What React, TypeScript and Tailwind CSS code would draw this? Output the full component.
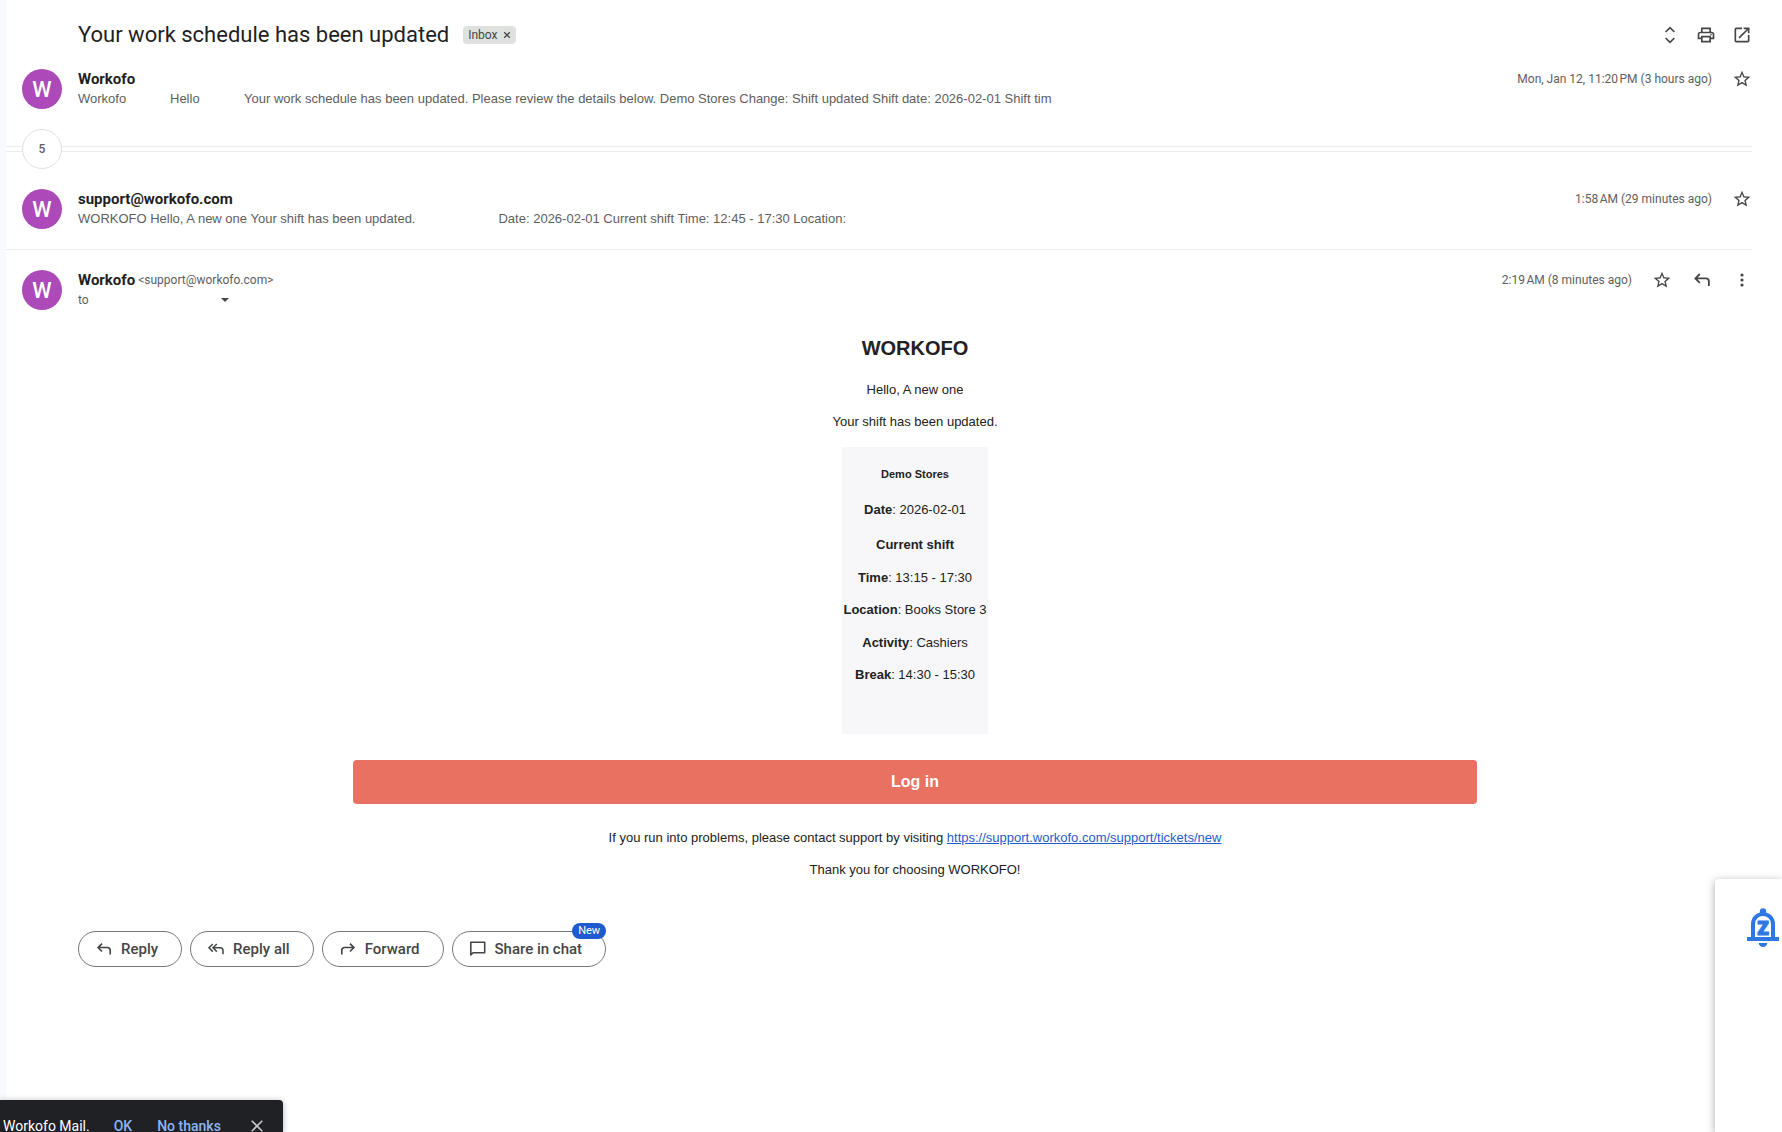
import type { ReactNode } from "react";

type IconProps = { className?: string };

const StarIcon = () => (
  <svg viewBox="0 0 24 24" className="size-5" fill="currentColor" aria-hidden="true">
    <path d="M22 9.24l-7.19-.62L12 2 9.19 8.63 2 9.24l5.46 4.73L5.82 21 12 17.27 18.18 21l-1.63-7.03L22 9.24zM12 15.4l-3.76 2.27 1-4.28-3.32-2.88 4.38-.38L12 6.1l1.71 4.04 4.38.38-3.32 2.88 1 4.28L12 15.4z" />
  </svg>
);

const ExpandIcon = () => (
  <svg viewBox="0 0 20 20" className="size-5" fill="none" stroke="currentColor" strokeWidth="1.7" aria-hidden="true">
    <path d="M5.6 7L10 2.7 14.4 7M5.6 13l4.4 4.3 4.4-4.3" />
  </svg>
);

const PrintIcon = () => (
  <svg viewBox="0 0 24 24" className="size-5" fill="currentColor" aria-hidden="true">
    <path d="M19 8h-1V3H6v5H5c-1.66 0-3 1.34-3 3v6h4v4h12v-4h4v-6c0-1.66-1.34-3-3-3zM8 5h8v3H8V5zm8 12v2H8v-4h8v2zm2-2v-2H6v2H4v-4c0-.55.45-1 1-1h14c.55 0 1 .45 1 1v4h-2z" />
    <circle cx="18" cy="11.5" r="1" />
  </svg>
);

const OpenIcon = () => (
  <svg viewBox="0 0 24 24" className="size-5" fill="currentColor" aria-hidden="true">
    <path d="M19 19H5V5h7V3H5a2 2 0 0 0-2 2v14a2 2 0 0 0 2 2h14c1.1 0 2-.9 2-2v-7h-2v7zM14 3v2h3.59l-9.83 9.83 1.41 1.41L19 6.41V10h2V3h-7z" />
  </svg>
);

const ReplyIcon = ({ className = "size-5" }: IconProps) => (
  <svg viewBox="0 0 20 20" className={className} fill="none" stroke="currentColor" strokeWidth="1.8" aria-hidden="true">
    <path d="M7.8 4L3.4 8.4l4.4 4.4M3.4 8.4h10.3a3.2 3.2 0 0 1 3.2 3.2V16" />
  </svg>
);

const ReplyAllIcon = () => (
  <svg viewBox="0 0 20 20" className="size-5" fill="none" stroke="currentColor" strokeWidth="1.5" aria-hidden="true">
    <path d="M6.8 5L3 8.8l3.8 3.8M10.8 5L7 8.8l3.8 3.8M7 8.8h7.2a2.8 2.8 0 0 1 2.8 2.8v3.6" />
  </svg>
);

const MoreIcon = () => (
  <svg viewBox="0 0 20 20" className="size-5" fill="currentColor" aria-hidden="true">
    <circle cx="10" cy="5" r="1.6" />
    <circle cx="10" cy="10" r="1.6" />
    <circle cx="10" cy="15" r="1.6" />
  </svg>
);

const ChatIcon = () => (
  <svg viewBox="0 0 20 20" className="size-5" fill="none" stroke="currentColor" strokeWidth="1.6" aria-hidden="true">
    <path d="M2.8 16V3.3h13.9v10.4H5.1z" strokeLinejoin="round" />
  </svg>
);

const SnoozeBell = () => (
  <svg viewBox="0 0 32 40" className="h-10 w-8" fill="#2f78e4" role="img" aria-label="Snoozed notifications">
    <circle cx="16" cy="3.5" r="3.2" />
    <path d="M6 30V16a10 10 0 0 1 20 0v14" fill="none" stroke="#2f78e4" strokeWidth="4" />
    <path d="M0 29h32v4H0zM11.7 35h8.6a4.3 4 0 0 1-8.6 0z" />
    <text x="16" y="27" textAnchor="middle" fontFamily="Open Sans, sans-serif" fontSize="19" fontWeight="800" stroke="#2f78e4" strokeWidth="1">
      Z
    </text>
  </svg>
);

function IconButton({ label, children }: { label: string; children: ReactNode }) {
  return (
    <button type="button" aria-label={label} className="flex size-5 items-center justify-center text-[#444746]">
      {children}
    </button>
  );
}

const Avatar = () => (
  <div className="flex size-10 shrink-0 items-center justify-center rounded-full bg-[#ab4ab8] text-[22px] font-medium text-white">
    W
  </div>
);

type MessageProps = { sender: ReactNode; detail: ReactNode; time: string; actions: ReactNode };

function Message({ sender, detail, time, actions }: MessageProps) {
  return (
    <div className="flex items-start gap-4 pl-4">
      <Avatar />
      <div className="min-w-0 flex-1">
        <div className="h-5 leading-5">{sender}</div>
        <div className="h-5 overflow-hidden leading-5 whitespace-nowrap text-[#5e5e5e]">{detail}</div>
      </div>
      <div className="flex h-5 items-center gap-5 text-xs text-[#5e5e5e]">
        <time>{time}</time>
        {actions}
      </div>
    </div>
  );
}

const Name = ({ children }: { children: ReactNode }) => (
  <span className="text-[15px] font-bold text-[#1f1f1f]">{children}</span>
);

function Pill({ icon, label, badge }: { icon: ReactNode; label: string; badge?: string }) {
  return (
    <button
      type="button"
      className="relative flex h-9 items-center gap-[7px] rounded-full border border-[#747775] pr-[23px] pl-[15px] text-[15px] font-medium text-[#444746]"
    >
      {icon}
      {label}
      {badge && (
        <span className="absolute -top-[9px] -right-px rounded-full bg-[#1f5bd0] px-[6px] text-[11px] leading-4 font-normal text-white">
          {badge}
        </span>
      )}
    </button>
  );
}

const star = (
  <IconButton label="Star">
    <StarIcon />
  </IconButton>
);

export default function App() {
  return (
    <div className="relative flex h-screen overflow-hidden bg-white font-[Roboto,sans-serif]">
      <div className="w-[6px] shrink-0 bg-[#f8fafd]" />

      <main className="mr-[30px] flex-1">
        <header className="flex h-[69px] items-center pl-[72px]">
          <h1 className="text-[22px] leading-7 text-[#1f1f1f]">Your work schedule has been updated</h1>
          <span className="ml-[14px] flex h-[18px] items-center gap-[5px] rounded bg-[#dfe1df] px-[5px] text-xs text-[#444746]">
            Inbox
            <button type="button" aria-label="Remove label Inbox" className="text-[#444746]">
              <svg viewBox="0 0 8 8" className="mt-px size-2" stroke="currentColor" strokeWidth="1.3" aria-hidden="true">
                <path d="M1.2 1.2l5.6 5.6M6.8 1.2L1.2 6.8" />
              </svg>
            </button>
          </span>
          <div className="ml-auto flex gap-4">
            <IconButton label="Expand all">
              <ExpandIcon />
            </IconButton>
            <IconButton label="Print all">
              <PrintIcon />
            </IconButton>
            <IconButton label="Open in new window">
              <OpenIcon />
            </IconButton>
          </div>
        </header>

        <section className="h-[77px]">
          <Message
            sender={<Name>Workofo</Name>}
            detail={
              <div className="flex font-['Liberation_Sans',sans-serif] text-[13px]">
                <span className="mr-11 w-12 overflow-hidden">Workofo</span>
                <span className="mr-11 w-[30px] overflow-hidden">Hello</span>
                <span>
                  Your work schedule has been updated. Please review the details below. Demo Stores Change: Shift updated
                  Shift date: 2026-02-01 Shift tim
                </span>
              </div>
            }
            time={"Mon, Jan 12, 11:20\u202fPM (3 hours ago)"}
            actions={star}
          />
        </section>

        <div className="relative h-[6px] border-y border-[#ebedec]">
          <button
            type="button"
            aria-label="Show 5 older messages"
            className="absolute -top-[18px] left-4 size-10 rounded-full border border-[#dfe1e0] bg-white text-xs font-medium text-[#5e5e5e]"
          >
            5
          </button>
        </div>

        <section className="h-[98px] border-b border-[#ebedec] pt-[37px]">
          <Message
            sender={<Name>support@workofo.com</Name>}
            detail={
              <div className="flex gap-[83px] font-['Liberation_Sans',sans-serif] text-[13px]">
                <span>WORKOFO Hello, A new one Your shift has been updated.</span>
                <span>Date: 2026-02-01 Current shift Time: 12:45 - 17:30 Location:</span>
              </div>
            }
            time={"1:58\u202fAM (29 minutes ago)"}
            actions={star}
          />
        </section>

        <section className="pt-5">
          <Message
            sender={
              <div className="flex gap-[3px]">
                <Name>Workofo</Name>
                <span className="text-xs leading-5 text-[#5e5e5e]">&lt;support@workofo.com&gt;</span>
              </div>
            }
            detail={
              <div className="flex items-center text-xs leading-5">
                <span className="w-[143px]">to</span>
                <button type="button" aria-label="Show details" className="text-[#444746]">
                  <svg viewBox="0 0 8 4" className="h-1 w-2" fill="currentColor" aria-hidden="true">
                    <path d="M0 0h8L4 4z" />
                  </svg>
                </button>
              </div>
            }
            time={"2:19\u202fAM (8 minutes ago)"}
            actions={
              <>
                {star}
                <IconButton label="Reply">
                  <ReplyIcon />
                </IconButton>
                <IconButton label="More">
                  <MoreIcon />
                </IconButton>
              </>
            }
          />

          <article className="mt-6 flex flex-col items-center pl-[72px] text-center font-['Liberation_Sans',sans-serif] text-[13px] leading-5 text-[#222222]">
            <h2 className="text-[20px] leading-7 font-bold">WORKOFO</h2>
            <p className="mt-[18px]">Hello, A new one</p>
            <p className="mt-3">Your shift has been updated.</p>

            <div className="mt-[15px] bg-[#f7f7fa] px-px pt-[17px] pb-[49px]">
              <h5 className="text-[11px] leading-5 font-bold">Demo Stores</h5>
              <p className="mt-4">
                <b>Date</b>: 2026-02-01
              </p>
              <h4 className="mt-[15px] font-bold">Current shift</h4>
              <p className="mt-[13px]">
                <b>Time</b>: 13:15 - 17:30
              </p>
              <p className="mt-3">
                <b>Location</b>: Books Store 3
              </p>
              <p className="mt-[13px]">
                <b>Activity</b>: Cashiers
              </p>
              <p className="mt-3">
                <b>Break</b>: 14:30 - 15:30
              </p>
            </div>

            <a
              href="#login"
              className="mt-[26px] block w-full max-w-[1124px] rounded bg-[#e97161] text-base leading-[44px] font-bold text-white"
            >
              Log in
            </a>

            <p className="mt-6">
              If you run into problems, please contact support by visiting{" "}
              <a href="https://support.workofo.com/support/tickets/new" className="text-[#1f5bd0] underline">
                https://support.workofo.com/support/tickets/new
              </a>
            </p>
            <p className="mt-3">Thank you for choosing WORKOFO!</p>
          </article>

          <div className="mt-[51px] flex gap-2 pl-[72px]">
            <Pill icon={<ReplyIcon className="size-5 p-px" />} label="Reply" />
            <Pill icon={<ReplyAllIcon />} label="Reply all" />
            <Pill icon={<ReplyIcon className="size-5 -scale-x-100 p-px" />} label="Forward" />
            <Pill icon={<ChatIcon />} label="Share in chat" badge="New" />
          </div>
        </section>
      </main>

      <aside className="absolute top-[879px] right-0 bottom-0 w-[67px] rounded-tl bg-white pt-[29px] pl-8 shadow-[0_2px_8px_rgba(0,0,0,0.35)]">
        <SnoozeBell />
      </aside>

      <div
        role="status"
        className="absolute bottom-0 left-0 flex h-8 items-start rounded-tr bg-[#202124] pt-5 pr-5 pl-[3px] text-sm leading-3 text-white shadow-[0_1px_6px_rgba(0,0,0,0.3)]"
      >
        <span>Workofo Mail.</span>
        <button type="button" className="ml-6 font-medium text-[#8ab4f8]">
          OK
        </button>
        <button type="button" className="ml-[25px] font-medium text-[#8ab4f8]">
          No thanks
        </button>
        <button type="button" aria-label="Dismiss" className="ml-[30px] flex text-[#c4c7c5]">
          <svg viewBox="0 0 12 12" className="size-3" stroke="currentColor" strokeWidth="1.6" aria-hidden="true">
            <path d="M.7.7l10.6 10.6M11.3.7L.7 11.3" />
          </svg>
        </button>
      </div>
    </div>
  );
}
